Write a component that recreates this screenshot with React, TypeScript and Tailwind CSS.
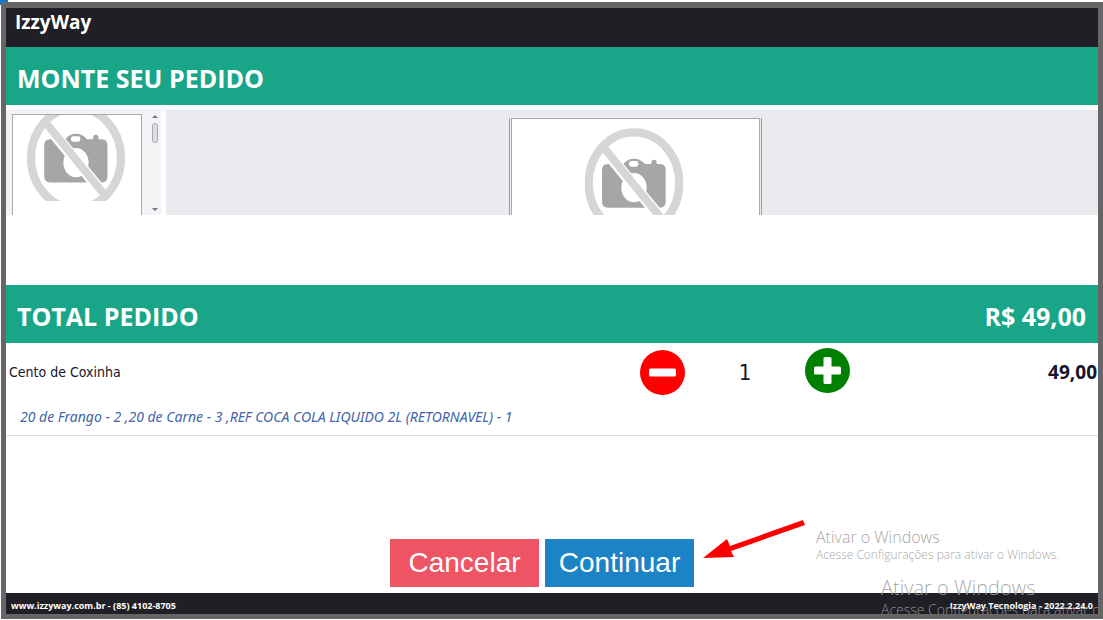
function NoPhoto({ className }: { className: string }) {
  return (
    <svg viewBox="-148 -165 296 330" preserveAspectRatio="xMidYMid slice" className={className} role="img" aria-label="Sem foto">
      <path
        fill="#a6a6a6"
        d="M-78 -57H-32C-24 -67 -14 -73 0 -73C14 -73 24 -67 33 -57H52V-64Q53 -70 60 -70Q67 -70 68 -64V-57H78Q95 -57 95 -38V57Q95 74 78 74H-78Q-96 74 -96 57V-38Q-96 -57 -78 -57Z"
      />
      <rect x="-15" y="-66" width="28" height="17" rx="7" fill="#fff" />
      <ellipse cx="0" cy="14" rx="38" ry="44" fill="#fff" />
      <path d="M-94 -106L92 119" stroke="#fff" strokeWidth="34" />
      <ellipse cx="0" cy="0" rx="136" ry="152" fill="none" stroke="#d6d6d6" strokeWidth="25" />
      <path d="M-94 -110L94 121" stroke="#d6d6d6" strokeWidth="24" />
    </svg>
  );
}

export default function App() {
  return (
    <div className="min-h-screen flex flex-col bg-white pl-px pt-0.5 pb-px font-['Noto_Sans','Open_Sans',sans-serif]">
      <div className="absolute left-0 top-0 w-2 h-[5px] bg-[#0a78d4]" />
      <div className="relative flex-1 flex flex-col overflow-hidden border-[5px] border-t-[6px] border-[#666]">
        <header className="h-[39px] px-[9px] bg-[#201f25]">
          <h1 className="font-['Open_Sans',sans-serif] text-[19px] leading-7 font-bold text-white">IzzyWay</h1>
        </header>

        <div className="h-[58px] px-[11px] flex items-center bg-[#19a688]">
          <h2 className="font-['Open_Sans',sans-serif] text-[25px] leading-8 pt-1 font-bold text-white">MONTE SEU PEDIDO</h2>
        </div>

        <section className="mt-[5px] h-[105px] flex gap-[5px]">
          <div className="w-[155px] flex pl-1.5 pt-1 bg-[#f3f3f5]">
            <button className="w-[130px] pr-0.5 flex justify-center items-start bg-white border border-b-0 border-[#a9a9b5]">
              <NoPhoto className="w-[98px] h-[86px]" />
            </button>
            <div className="flex-1 ml-1.5 flex flex-col items-center pt-px pb-1">
              <svg viewBox="0 0 6 3" className="w-1.5 h-[3px]"><path d="M0 3L3 0L6 3Z" fill="#777784" /></svg>
              <div className="mt-[5px] w-1.5 h-5 rounded-sm border border-[#a8a8b2] bg-[#dddfe6]" />
              <svg viewBox="0 0 6 3" className="mt-auto w-1.5 h-[3px]"><path d="M0 0L3 3L6 0Z" fill="#777784" /></svg>
            </div>
          </div>
          <div className="flex-1 flex justify-center pt-2 bg-[#eaebef] overflow-hidden">
            <div className="w-[253px] mr-[-7px] px-px border-x border-[#9b9ba8]">
              <button className="w-full h-full pr-1 flex justify-center items-start pt-[9px] overflow-hidden bg-white border border-b-0 border-[#a9a9b5]">
                <NoPhoto className="w-[98px] h-[110px] shrink-0" />
              </button>
            </div>
          </div>
        </section>

        <div className="mt-[70px] h-[58px] px-[11px] flex items-center justify-between bg-[#19a688] font-['Open_Sans',sans-serif] text-[25px] leading-8 font-bold text-white">
          <h2 className="pt-1">TOTAL PEDIDO</h2>
          <p className="pt-1 pr-px">R$ 49,00</p>
        </div>

        <section className="h-[93px] border-b border-[#dedede]">
          <div className="h-[58px] flex items-center text-[#15152b] font-['DejaVu_Sans_Condensed','Noto_Sans',sans-serif]">
            <p className="flex-1 pl-[3px] text-sm">Cento de Coxinha</p>
            <div className="w-[210px] mr-[170px] flex items-center justify-between">
              <button aria-label="Diminuir">
                <svg viewBox="0 0 45 45" className="w-[45px] h-[45px]">
                  <circle cx="22.5" cy="22.5" r="22.5" fill="#f00" />
                  <rect x="9" y="18.5" width="27" height="8" rx="1.5" fill="#fff" />
                </svg>
              </button>
              <span className="text-[22px]">1</span>
              <button aria-label="Aumentar" className="pb-[3px]">
                <svg viewBox="0 0 45 45" className="w-[45px] h-[45px]">
                  <circle cx="22.5" cy="22.5" r="22.5" fill="#008000" />
                  <path d="M10.5 18.5H18.5V10.5Q18.5 9 20 9H25Q26.5 9 26.5 10.5V18.5H34.5Q36 18.5 36 20V25Q36 26.5 34.5 26.5H26.5V34.5Q26.5 36 25 36H20Q18.5 36 18.5 34.5V26.5H10.5Q9 26.5 9 25V20Q9 18.5 10.5 18.5Z" fill="#fff" />
                </svg>
              </button>
            </div>
            <p className="w-[78px] pr-px text-right font-['Noto_Sans',sans-serif] text-[19px] font-bold">49,00</p>
          </div>
          <p className="pl-3.5 pt-1.5 text-sm leading-5 italic text-[#4264a8]">
            20 de Frango - 2 ,20 de Carne - 3 ,REF COCA COLA LIQUIDO 2L (RETORNAVEL) - 1
          </p>
        </section>

        <div className="mt-auto mb-1.5 pr-5 flex justify-center gap-1.5 font-['Liberation_Sans',Arial,sans-serif] text-[28px] text-white">
          <button className="w-[149px] h-12 bg-[#ed5565]">Cancelar</button>
          <button className="w-[149px] h-12 bg-[#1c84c6]">Continuar</button>
        </div>

        <footer className="h-[21px] px-[5px] flex items-center justify-between bg-[#201f25] pt-1 font-['Open_Sans',sans-serif] text-[9px] font-bold text-white">
          <p>www.izzyway.com.br - (85) 4102-8705</p>
          <p>IzzyWay Tecnologia - 2022.2.24.0</p>
        </footer>

        {/* arrow pointing at the continue button */}
        <svg viewBox="0 0 102 40" className="absolute right-[293px] bottom-[54px] w-[102px] h-10">
          <path d="M0 38L24 19L27 26L100 0L102 5L28 31L31 37Z" fill="#f00" />
        </svg>

        <div className="absolute right-[41px] bottom-[51px] w-[241px] whitespace-nowrap text-[#a8a8a8] font-['Open_Sans',sans-serif] font-light">
          <p className="text-base leading-5">Ativar o Windows</p>
          <p className="text-xs leading-4">Acesse Configurações para ativar o Windows.</p>
        </div>
        <div className="absolute right-0 -bottom-1.5 w-[217px] overflow-hidden whitespace-nowrap text-[#a0a0a0]/90 font-['Open_Sans',sans-serif] font-light">
          <p className="text-xl leading-6">Ativar o Windows</p>
          <p className="text-sm leading-5">Acesse Configurações para ativar o Windows.</p>
        </div>
      </div>
    </div>
  );
}
